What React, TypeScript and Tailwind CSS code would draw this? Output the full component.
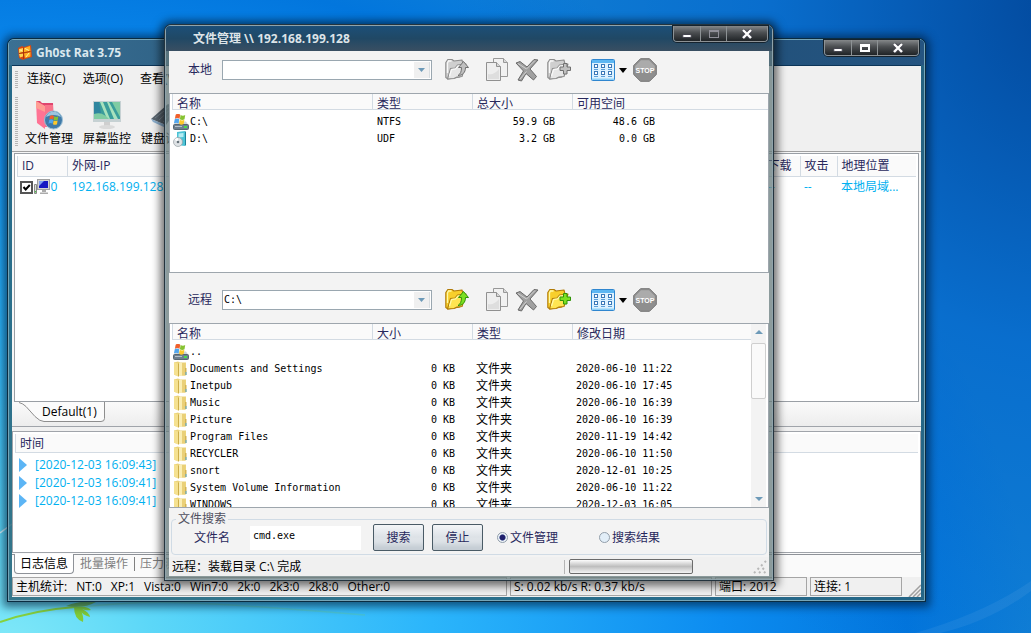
import type { ReactNode } from "react";

const drives = [
  { name: "C:\\", type: "NTFS", total: "59.9 GB", free: "48.6 GB", disc: false },
  { name: "D:\\", type: "UDF", total: "3.2 GB", free: "0.0 GB", disc: true },
];

const folders = [
  { name: "Documents and Settings", date: "2020-06-10 11:22" },
  { name: "Inetpub", date: "2020-06-10 17:45" },
  { name: "Music", date: "2020-06-10 16:39" },
  { name: "Picture", date: "2020-06-10 16:39" },
  { name: "Program Files", date: "2020-11-19 14:42" },
  { name: "RECYCLER", date: "2020-06-10 11:50" },
  { name: "snort", date: "2020-12-01 10:25" },
  { name: "System Volume Information", date: "2020-06-10 11:22" },
  { name: "WINDOWS", date: "2020-12-03 16:05" },
];

const logs = [
  "[2020-12-03 16:09:43]",
  "[2020-12-03 16:09:41]",
  "[2020-12-03 16:09:41]",
];

const hostStats = ["NT:0", "XP:1", "Vista:0", "Win7:0", "2k:0", "2k3:0", "2k8:0", "Other:0"];

/* ---------- Icons ---------- */

function FolderIcon({ gray, badge }: { gray?: boolean; badge: "up" | "plus" }) {
  const line = gray ? "#8c8c8c" : "#b07a08";
  const back = gray ? "#cfcfcf" : "#f8cf2c";
  const front = gray ? "#e6e6e6" : "#ffe552";
  const shine = gray ? "#f8f8f8" : "#fff9a8";
  const badgeFill = gray ? "#c0c0c0" : "#7be021";
  const badgeLine = gray ? "#707070" : "#2f9308";
  return (
    <svg viewBox="0 0 24 24" aria-hidden className="size-6">
      <path d="M.800 19.500V4.500l2-3H7l2 1.500 8-1 1 4-3 13-12 2z" fill={back} stroke={line} strokeWidth="1.100" strokeLinejoin="round" />
      <path d="M2.500 21 5.500 10.500l4.500-.5 2.500-3L21 6l-4 12.500-5 .5-3 1.500z" fill={front} stroke={line} strokeWidth="1.100" strokeLinejoin="round" />
      <path d="m4.500 18 2-6.500 4-.5 2.500-3 5-.5M2.500 15V5l1-2h3" fill="none" stroke={shine} strokeWidth="1.300" />
      {badge === "up" ? (
        <path
          d="M18.500 3.500 23.500 9.500h-3c0 5-3 8-7.500 8 2.500-1.500 3.500-4 3.500-8h-3z"
          fill={badgeFill}
          stroke={badgeLine}
        />
      ) : (
        <path
          d="M16.500 5.500h3.500v3.500h3.500v3.500H20V16h-3.500v-3.500H13V9h3.500z"
          fill={badgeFill}
          stroke={badgeLine}
        />
      )}
    </svg>
  );
}

function CopyIcon() {
  return (
    <svg viewBox="0 0 24 24" aria-hidden className="size-6">
      <path d="M8.500.500h10l4 4v14h-14z" fill="#f1f1f1" stroke="#989898" />
      <path d="M18.500.500v4h4" fill="#d8d8d8" stroke="#989898" />
      <path d="M1.500 4.500h10l4 4v14h-14z" fill="#eeeeee" stroke="#909090" />
      <path d="M3 21v-5c4 1 8-1 11-5v10z" fill="#dedede" />
      <path d="M11.500 4.500v4h4" fill="#d8d8d8" stroke="#909090" />
    </svg>
  );
}

function DeleteIcon() {
  return (
    <svg viewBox="0 0 24 24" aria-hidden className="size-6">
      <path
        d="M1 5 5 3.500l7 5.500 7-7.500 4 .5-8 9 6.500 7.500-3 3.500-7.500-6.500L6.500 23 3 22l5.500-9z"
        fill="#a0a0a0"
        stroke="#6a6a6a"
        strokeLinejoin="round"
      />
      <path d="m3 5.500 8.500 5.500L20 2.500M5 21l6.500-7.500" fill="none" stroke="#d0d0d0" />
    </svg>
  );
}

function ViewIcon() {
  const cells = [4, 11, 18];
  return (
    <svg viewBox="0 0 24 22" aria-hidden className="h-[22px] w-6">
      <rect x=".5" y=".5" width="23" height="21" rx="1" fill="#dcf1ff" stroke="#2f86cf" />
      <path d="M1 1h22v3H1z" fill="#5cb6f2" />
      <path d="M1 19.500h22V21H1z" fill="#8fd0f7" />
      {[5, 12].map((y) =>
        cells.map((x) => (
          <g key={`${x}-${y}`}>
            <rect x={x - 0.500} y={y + 0.500} width="3" height="3" fill="#fff" stroke="#3a78b8" />
            <path d={`M${x - 1} ${y + 5.500}h4`} stroke="#5b9fd8" />
          </g>
        )),
      )}
    </svg>
  );
}

function StopIcon() {
  return (
    <svg viewBox="0 0 24 24" aria-hidden className="size-6">
      <path d="M7.500.700h9l6.800 6.800v9l-6.800 6.800h-9L.700 16.500v-9z" fill="#8f8f8f" stroke="#757575" />
      <path d="M8 2.200h8L21.800 8v3.500H2.200V8z" fill="#ababab" />
      <text x="12" y="14.500" textAnchor="middle" fontSize="7" fontWeight="700" fill="#fff" fontFamily="Liberation Sans, sans-serif">
        STOP
      </text>
    </svg>
  );
}

function WindowsFlag({ x, y, s }: { x: number; y: number; s: number }) {
  return (
    <g transform={`translate(${x} ${y}) scale(${s})`}>
      <path d="M1 1q2-1.500 4 0L4.300 4.700Q2.500 3 .300 4.700z" fill="#f0602c" />
      <path d="M5.300 1.300q2 1.400 4 0L8.700 5q-2 1.200-4 0z" fill="#86c232" />
      <path d="M.200 5q2-1.500 4 0L3.500 8.700q-2-1.300-4 0z" fill="#4fa6ee" />
      <path d="M4.600 5.400q2 1.300 4 0L8 9.200q-2 1.300-4 0z" fill="#fdc82a" />
    </g>
  );
}

function DriveIcon() {
  return (
    <svg viewBox="0 0 16 16" aria-hidden className="size-4 shrink-0">
      <path d="m1 10.500 2-3h10l2 3z" fill="#ccd4da" />
      <rect x=".5" y="10.500" width="15" height="5" rx="1" fill="#6d7f8e" stroke="#566672" />
      <path d="M2 12.500h7" stroke="#b3c0ca" />
      <rect x="11" y="12" width="3" height="2" fill="#45d84f" />
      <WindowsFlag x={1.500} y={-0.500} s={1.150} />
    </svg>
  );
}

function DiscIcon() {
  return (
    <svg viewBox="0 0 16 16" aria-hidden className="size-4 shrink-0">
      <path d="m4 1 8-1v15l-8-1z" fill="#4cc3d6" />
      <path d="m5.500 2.500 5-.5v4l-5 .5z" fill="#b4ecf2" />
      <path d="m12 0 1 1v13l-1 1z" fill="#1b8298" />
      <circle cx="5" cy="11" r="4.500" fill="#dfe3e6" stroke="#959ea4" strokeWidth=".7" />
      <path d="m5 11-3.500-2.500A4 4 0 0 1 5 7z" fill="#fff" />
      <circle cx="5" cy="11" r="1.300" fill="#67737b" />
    </svg>
  );
}

function YellowFolder() {
  return (
    <svg viewBox="0 0 16 16" aria-hidden className="size-4 shrink-0">
      <path d="M1 1.500 5 .500l2 1h6v13H3l-2-1z" fill="#ecd47a" />
      <path d="m1 1.500 4 1v13l-4-2z" fill="#f5e190" />
      <path d="M5 2.500h1v13H5z" fill="#cdae49" />
      <path d="M6 2h3v12.500H6z" fill="#faeeb4" />
      <path d="M9 2h3v12.500H9z" fill="#ead078" />
      <path d="M12 7h1.500v7H12z" fill="#d3b352" />
      <path d="M12.500 11h1v3h-1z" fill="#55aede" />
    </svg>
  );
}

function AppIcon() {
  return (
    <svg viewBox="0 0 16 16" aria-hidden className="size-4">
      <path d="m1 3 4-2 2 1 7-2 1 12-7 2-2 1-4-2z" fill="#d94812" />
      <path d="m2 4 4-1v4L2 8zM2 9l4-.5v3L3 12.500z" fill="#ffd451" />
      <path d="m7 3 6-2 .5 5L7 7.500zM7 8.500 13.500 7v4.500L8 13z" fill="#ffb021" />
      <path d="m8 3.500 4 2M9 12l3-4M3 5l2 .5" stroke="#fff3a0" />
      <path d="M6.500 2.500v11.500M2 8.500 13 6.500" stroke="#a5340a" strokeWidth=".8" />
    </svg>
  );
}

function FileManagerIcon() {
  return (
    <svg viewBox="0 0 28 30" aria-hidden className="h-[30px] w-7">
      <path d="M1 1h4l2 2h11l1 24H8z" fill="#e0456e" />
      <path d="m1 1 9 5v23l-8-6z" fill="#ff7394" />
      <path d="m1 1 9 5v6L1 8z" fill="#ff9d93" />
      <path d="M10 5h8v22h-8z" fill="#f8748a" />
      <circle cx="18.500" cy="20" r="9" fill="#3f7aa8" stroke="#9dc0d6" />
      <path d="M11 17a8 8 0 0 1 15 0q-7-4-15 0z" fill="#9bc5df" />
      <WindowsFlag x={14} y={15} s={1} />
    </svg>
  );
}

function ScreenIcon() {
  return (
    <svg viewBox="0 0 30 30" aria-hidden className="size-[30px]">
      <path d="M1 1h28v21H1z" fill="#c6d1d3" />
      <path d="M2 2h26v17H2z" fill="#3a9d9b" />
      <path d="M2 2h5l3 17H2z" fill="#2f869f" />
      <path d="M8 2h3l7 17h-3zM15 2h2l9 17h-4z" fill="#a8e2bd" />
      <path d="m20 2 8 15V2zM2 14q8-3 15 5H2z" fill="#7fcca3" />
      <path d="M12 22h6v4h-6z" fill="#cfcfcf" />
      <ellipse cx="15" cy="27" rx="8" ry="2" fill="#dadada" />
    </svg>
  );
}

function KeyboardIcon() {
  return (
    <svg viewBox="0 0 30 30" aria-hidden className="size-[30px]">
      <path d="M1 19 18 4l10 4-12 17z" fill="#5a6670" />
      <path d="m1 19 15 6v3L3 22z" fill="#8db0cf" />
      <path d="m5 18 14-11M9 20 22 8M13 22 25 9" stroke="#79858e" />
    </svg>
  );
}

function ComputerIcon() {
  return (
    <svg viewBox="0 0 16 16" aria-hidden className="size-4">
      <path d="M.500 5.500h2v9h-2z" fill="#dde0d4" stroke="#8a8a8a" />
      <path d="M1 12h1v1.500H1z" fill="#45c845" />
      <rect x="3.500" y=".5" width="12" height="10" fill="#d3d3d3" stroke="#a0a0a0" />
      <path d="M5 2h9v7H5z" fill="#1717c2" />
      <path d="M5 2h5L5 7z" fill="#7f9ff2" />
      <path d="M8 11h4v2H8zM6 13.500h8V15H6z" fill="#ababab" />
    </svg>
  );
}

/* ---------- Window chrome ---------- */

function CaptionButtons({ maxDisabled }: { maxDisabled?: boolean }) {
  const base =
    "flex h-[15px] items-center justify-center bg-linear-to-b from-[#85888a] via-[#4b4e51] via-45% to-[#202427]";
  return (
    <div className="flex divide-x divide-[#8d9295] overflow-hidden rounded-b border border-t-0 border-[#8d9295] shadow-[0_0_0_1px_#15232e]">
      <button type="button" aria-label="最小化" className={`${base} w-[27px]`}>
        <span className="mt-1 h-1 w-2.5 rounded-xs border border-[#45454f] bg-white" />
      </button>
      <button type="button" aria-label="最大化" disabled={maxDisabled} className={`${base} w-[26px]`}>
        <span
          className={
            maxDisabled
              ? "h-2 w-2.5 border border-t-2 border-[#8f8f98]"
              : "h-2 w-2.5 border-2 border-t-3 border-white"
          }
        />
      </button>
      <button type="button" aria-label="关闭" className={`${base} w-[40px]`}>
        <svg viewBox="0 0 12 10" aria-hidden className="h-2.5 w-3">
          <path d="m2 1 8 8m0-8L2 9" stroke="#45454f" strokeWidth="4" />
          <path d="m2 1 8 8m0-8L2 9" stroke="#fff" strokeWidth="2.400" />
        </svg>
      </button>
    </div>
  );
}

function Combo({ id, label, value }: { id: string; label: string; value: string }) {
  return (
    <>
      <label htmlFor={id} className="w-[34px] shrink-0 text-[#28285c]">
        {label}
      </label>
      <div className="relative w-[210px]">
        <select
          id={id}
          defaultValue={value}
          className="block h-5 w-full appearance-none border border-[#9aa7b0] bg-white px-px font-['DejaVu_Sans_Mono',monospace] text-[10px] leading-4 text-black"
        >
          <option>{value}</option>
        </select>
        <span className="pointer-events-none absolute inset-y-0.5 right-0.5 flex w-4 items-center justify-center border-r border-[#d8dde0] bg-[#f0f0f0]">
          <svg viewBox="0 0 7 4" aria-hidden className="h-1 w-[7px]">
            <path d="M0 0h7L3.500 4z" fill="#6d9ab8" />
          </svg>
        </span>
      </div>
    </>
  );
}

function PathBar({ id, label, value, gray, className }: { id: string; label: string; value: string; gray?: boolean; className: string }) {
  return (
    <div className={`flex shrink-0 items-center pl-[19px] ${className}`}>
      <Combo id={id} label={label} value={value} />
      <div className="ml-[13px] flex items-center">
        <button type="button" aria-label="上级目录" className="mr-4">
          <FolderIcon gray={gray} badge="up" />
        </button>
        <button type="button" aria-label="复制" className="mr-1.5">
          <CopyIcon />
        </button>
        <button type="button" aria-label="删除" className="mr-2">
          <DeleteIcon />
        </button>
        <button type="button" aria-label="新建文件夹" className="mr-5">
          <FolderIcon gray={gray} badge="plus" />
        </button>
        <button type="button" aria-label="查看方式" className="mr-1.5 flex items-center gap-1">
          <ViewIcon />
          <svg viewBox="0 0 8 5" aria-hidden className="h-[5px] w-2">
            <path d="M0 0h8L4 5z" fill="#000" />
          </svg>
        </button>
        <button type="button" aria-label="停止传输">
          <StopIcon />
        </button>
      </div>
    </div>
  );
}

function FileTable({ heads, children }: { heads: string[]; children: ReactNode }) {
  return (
    <table className="w-full table-fixed border-collapse font-['DejaVu_Sans_Mono','Noto_Sans_CJK_SC',monospace] text-[10px] leading-4 text-black">
      <colgroup>
        <col className="w-[200px]" />
        <col className="w-[100px]" />
        <col className="w-[100px]" />
        <col />
      </colgroup>
      <thead>
        <tr>
          {heads.map((h) => (
            <th key={h} className="h-[19px] p-0 text-left align-top font-normal">
              <div className="h-4 border-b border-l border-[#d3dbe3] bg-[#fafafa] pl-1 font-['Noto_Sans_CJK_SC',sans-serif] text-[12px] leading-[18px] text-[#28285c]">
                {h}
              </div>
            </th>
          ))}
        </tr>
      </thead>
      <tbody>{children}</tbody>
    </table>
  );
}

function NameCell({ icon, name }: { icon: ReactNode; name: string }) {
  return (
    <td className="h-[17px] p-0">
      <div className="flex h-[17px] items-center gap-px whitespace-nowrap pl-px">
        {icon}
        {name}
      </div>
    </td>
  );
}

function ScrollBar() {
  return (
    <div aria-hidden className="flex w-[17px] shrink-0 flex-col items-center border-r-2 border-white bg-[#f3f3f3]">
      <svg viewBox="0 0 8 4" className="my-1.5 h-1 w-2">
        <path d="m4 0 4 4H0z" fill="#6d9ab8" />
      </svg>
      <div className="mt-[3px] h-14 w-[15px] rounded-xs border border-[#cfcfcf] bg-[#fafafa]" />
      <div className="flex-1" />
      <svg viewBox="0 0 8 4" className="my-1.5 h-1 w-2">
        <path d="M0 0h8L4 4z" fill="#6d9ab8" />
      </svg>
    </div>
  );
}

function Grip({ className }: { className: string }) {
  return (
    <div
      aria-hidden
      className={`w-[3px] bg-[repeating-linear-gradient(to_bottom,#b5b5b5_0,#b5b5b5_1px,transparent_1px,transparent_2px)] ${className}`}
    />
  );
}

function SizeGrip() {
  return (
    <svg viewBox="0 0 13 13" aria-hidden className="size-[13px] self-end">
      <path d="M1 13 13 1M5 13l8-8M9 13l4-4" stroke="#a0a0a0" strokeWidth="1.500" />
    </svg>
  );
}

/* ---------- Windows ---------- */

function MainWindow() {
  return (
    <section className="absolute top-[39px] right-[106px] bottom-[32px] left-2 flex flex-col rounded-t-md border border-[#76a5b8] bg-[#2b6478]/85 px-[3px] pb-[3px] shadow-[0_0_0_1px_#0b2c40,0_1px_9px_5px_rgba(0,25,50,0.6)]">
      <header className="-mx-[3px] flex h-[25px] shrink-0 items-start justify-between rounded-t bg-linear-to-r from-[#3b7093] via-[#1d4d73] to-[#255480] pr-[5px] pl-2">
        <h1 className="flex h-[25px] items-center gap-[3px] text-[12px] font-bold text-[#dbe8ee]">
          <AppIcon />
          Gh0st Rat 3.75
        </h1>
        <CaptionButtons />
      </header>

      <div className="flex min-h-0 flex-1 flex-col bg-[#f0f0f0]">
        <nav className="flex h-[27px] shrink-0 items-center gap-[17px] border-t border-[#0c3558] pl-[3px] text-black">
          <Grip className="-mr-2 h-[17px]" />
          <button type="button">连接(C)</button>
          <button type="button">选项(O)</button>
          <button type="button">查看(V)</button>
        </nav>
        <div className="flex h-[59px] shrink-0 items-center pl-[3px] text-black">
          <Grip className="mr-0.5 h-[50px]" />
          {[
            { label: "文件管理", icon: <FileManagerIcon /> },
            { label: "屏幕监控", icon: <ScreenIcon /> },
            { label: "键盘记录", icon: <KeyboardIcon /> },
          ].map((b) => (
            <button key={b.label} type="button" className="flex w-[58px] flex-col items-center whitespace-nowrap pt-1">
              {b.icon}
              <span className="leading-[18px]">{b.label}</span>
            </button>
          ))}
        </div>

        <div className="min-h-0 flex-1 border-t border-[#a0a0a0] bg-[#f6f6f6] px-0.5 pt-px">
          <div className="h-full overflow-hidden border border-[#9a9fa5] bg-white px-0.5 pt-0.5">
            <table className="w-full table-fixed border-collapse">
              <colgroup>
                <col className="w-[50px]" />
                <col className="w-[200px]" />
                <col />
                <col className="w-[37px]" />
                <col className="w-[37px]" />
                <col className="w-[79px]" />
              </colgroup>
              <thead>
                <tr className="h-5 border-b border-[#d3dbe3] bg-[#fafafa] text-left text-[#28285c] [&>th]:border-l [&>th]:border-[#d3dbe3] [&>th]:py-0 [&>th]:pl-1 [&>th]:font-normal [&>th]:whitespace-nowrap">
                  <th>ID</th>
                  <th>外网-IP</th>
                  <th />
                  <th>下载</th>
                  <th>攻击</th>
                  <th>地理位置</th>
                </tr>
              </thead>
              <tbody>
                <tr className="h-[22px] text-[#00b0f0] [&>td]:py-0 [&>td]:pl-1 [&>td]:whitespace-nowrap">
                  <td>
                    <label className="-ml-0.5 flex items-center gap-px">
                      <span className="relative flex size-[13px] shrink-0">
                        <input
                          type="checkbox"
                          defaultChecked
                          className="size-[13px] appearance-none border-2 border-[#555] bg-white"
                        />
                        <svg viewBox="0 0 13 13" aria-hidden className="pointer-events-none absolute inset-0">
                          <path d="m3.500 6 2.200 2.500L9.800 4" fill="none" stroke="#000" strokeWidth="2" />
                        </svg>
                      </span>
                      <ComputerIcon />
                      <span>0</span>
                    </label>
                  </td>
                  <td>192.168.199.128</td>
                  <td />
                  <td>--</td>
                  <td>--</td>
                  <td>本地局域...</td>
                </tr>
              </tbody>
            </table>
          </div>
        </div>

        <div className="h-[25px] shrink-0 border-b border-[#a0a4aa] bg-linear-to-b from-[#fafafa] to-[#ededed] pl-0.5">
          <div className="relative h-5 w-[91px]">
            <svg viewBox="0 0 91 20" aria-hidden className="absolute inset-0 h-5 w-[91px]">
              <path d="M0-1h5q4 1 7 5l9 10q5 5 9 5h57q3 0 3-3V-1z" fill="#fbfbfb" />
              <path d="M5 .500q4 1 7 4l9 10q5 5 9 5h57q3.500 0 3.500-3V0" fill="none" stroke="#8e8e8e" />
            </svg>
            <button type="button" className="relative pl-7 leading-5 text-black">
              Default(1)
            </button>
          </div>
        </div>

        <div className="mt-1 h-[122px] shrink-0 border border-[#a0a4aa] bg-white px-0.5 pt-0.5">
          <div className="h-[19px] border-b border-l border-[#d3dbe3] bg-[#fafafa] pl-1 leading-5 text-[#28285c]">
            时间
          </div>
          <ul className="pt-[3px]">
            {logs.map((l, i) => (
              <li key={i} className="flex h-[18px] items-center gap-2 pl-1 text-[#00b0f0]">
                <svg viewBox="0 0 8 14" aria-hidden className="h-3.5 w-2">
                  <path d="M0 0v14l8-7z" fill="#5cb5f5" />
                </svg>
                {l}
              </li>
            ))}
          </ul>
        </div>

        <div className="flex h-6 shrink-0 items-start bg-[#fafafa] pt-px">
          <div className="flex flex-1 items-start border-t border-[#8e9298] pl-0.5 text-[#808080]">
            <button type="button" className="-mt-px h-5 rounded-b border border-t-0 border-[#8e9298] bg-white px-[5px] text-black">
              日志信息
            </button>
            <button type="button" className="h-[18px] px-1.5">批量操作</button>
            <button type="button" className="mt-0.5 h-3.5 border-l border-[#808080] px-[5px] leading-3.5">
              压力测试
            </button>
          </div>
        </div>

        <footer className="flex h-5 shrink-0 gap-[3px] text-black [&>div]:h-[19px] [&>div]:border [&>div]:border-[#a5a5a5] [&>div]:pl-[3px] [&>div]:leading-[18px]">
          <div className="flex min-w-0 flex-1 gap-[9px] overflow-hidden whitespace-nowrap">
            <span>主机统计:</span>
            {hostStats.map((s) => (
              <span key={s}>{s}</span>
            ))}
          </div>
          <div className="w-[202px]">S: 0.02 kb/s R: 0.37 kb/s</div>
          <div className="w-[92px]">端口: 2012</div>
          <div className="w-[92px]">连接: 1</div>
          <span className="flex w-4 justify-end">
            <SizeGrip />
          </span>
        </footer>
      </div>
    </section>
  );
}

function FileManagerWindow() {
  const action =
    "h-[27px] w-[51px] rounded-xs border border-[#4a5b66] bg-linear-to-b from-[#f4f6f8] from-0% via-[#dde2e7] via-48% to-[#e8ecef] text-[#28285c] shadow-[inset_0_-9px_5px_-3px_#c5cdd4]";
  return (
    <section className="absolute top-[25px] right-[258px] bottom-[53px] left-[165px] flex flex-col rounded-t-md border border-[#8fa3ab] bg-[#66797b]/75 px-[3px] pb-[3px] shadow-[0_0_0_1px_#24343e,0_1px_9px_5px_rgba(0,0,0,0.55)]">
      <header className="-mx-[3px] flex h-[25px] shrink-0 items-start justify-between rounded-t bg-linear-to-b from-[#1c4f78] via-[#204865] via-50% to-[#394f62] pr-1 pl-[27px]">
        <h2 className="text-[12px] leading-[26px] font-bold text-[#dde4e8]">文件管理 \\ 192.168.199.128</h2>
        <CaptionButtons maxDisabled />
      </header>

      <div className="flex min-h-0 flex-1 flex-col bg-[#f3f3f3]">
        <PathBar id="local-path" label="本地" value="" gray className="h-[42px] pb-1" />
        <div className="h-45 shrink-0 overflow-hidden border border-[#9ea6ad] bg-white pl-0.5">
          <FileTable heads={["名称", "类型", "总大小", "可用空间"]}>
            {drives.map((d) => (
              <tr key={d.name}>
                <NameCell icon={d.disc ? <DiscIcon /> : <DriveIcon />} name={d.name} />
                <td className="py-0 pr-0 pl-[5px]">{d.type}</td>
                <td className="py-0 pr-[17px] pl-0 text-right">{d.total}</td>
                <td className="p-0">
                  <div className="w-[83px] text-right">{d.free}</div>
                </td>
              </tr>
            ))}
          </FileTable>
        </div>

        <PathBar id="remote-path" label="远程" value="C:\" className="h-[50px] pt-1" />
        <div className="flex min-h-0 flex-1 overflow-hidden border border-[#9ea6ad] bg-white pl-0.5">
          <div className="min-w-0 flex-1 overflow-hidden">
            <FileTable heads={["名称", "大小", "类型", "修改日期"]}>
              <tr>
                <NameCell icon={<DriveIcon />} name=".." />
                <td />
                <td />
                <td />
              </tr>
              {folders.map((f) => (
                <tr key={f.name}>
                  <NameCell icon={<YellowFolder />} name={f.name} />
                  <td className="py-0 pr-[17px] pl-0 text-right">0 KB</td>
                  <td className="py-0 pr-0 pl-1 text-[12px] leading-4">文件夹</td>
                  <td className="py-0 pr-0 pl-1">{f.date}</td>
                </tr>
              ))}
            </FileTable>
          </div>
          <ScrollBar />
        </div>

        <div className="h-[49px] shrink-0 px-0.5 pt-[3px]">
          <fieldset className="h-11 rounded border border-[#d0dbe5] pl-[22px] text-[#28285c]">
            <legend className="-ml-[18px] px-0.5 leading-4 text-[#505060]">文件搜索</legend>
            <div className="-mt-[3px] flex h-[27px] items-center">
              <label htmlFor="file-name" className="w-14">
                文件名
              </label>
              <input
                id="file-name"
                type="text"
                defaultValue="cmd.exe"
                className="h-6 w-[111px] bg-white px-[3px] pb-1 font-['DejaVu_Sans_Mono',monospace] text-[10px] text-black"
              />
              <button type="submit" className={`${action} ml-3`}>
                搜索
              </button>
              <button type="button" className={`${action} ml-2`}>
                停止
              </button>
              {[
                { label: "文件管理", on: true, pos: "ml-3.5 w-[102px]" },
                { label: "搜索结果", on: false, pos: "" },
              ].map((r) => (
                <label key={r.label} className={`flex items-center gap-0.5 whitespace-nowrap ${r.pos}`}>
                  <input
                    type="radio"
                    name="result-view"
                    defaultChecked={r.on}
                    className="size-[11px] appearance-none rounded-full border border-[#929eaa] bg-[#e2eef8] checked:bg-radial checked:from-[#20206c] checked:from-40% checked:to-[#eef4f9] checked:to-55%"
                  />
                  {r.label}
                </label>
              ))}
            </div>
          </fieldset>
        </div>

        <footer className="flex h-[19px] shrink-0 items-center bg-[#f0f0f0] pl-[3px] text-black">
          <span className="min-w-0 flex-1 truncate leading-5">远程：装载目录 C:\ 完成</span>
          <span className="mr-1 h-3.5 border-l border-[#b4b4b4]" />
          <div
            role="progressbar"
            aria-label="进度"
            className="mr-[60px] h-[15px] w-[124px] rounded-xs border border-[#6b6b6b] bg-linear-to-b from-[#fcfcfc] via-[#bebebe] to-[#f4f4f4]"
          />
          <svg viewBox="0 0 14 14" aria-hidden className="mr-0.5 size-3.5">
            <path d="M1 13 13 1M6 13l7-7M11 13l2-2" stroke="#b8b8b8" strokeWidth="2" strokeDasharray="2 3" />
          </svg>
        </footer>
      </div>
    </section>
  );
}

function Wallpaper() {
  return (
    <svg viewBox="0 0 1031 633" preserveAspectRatio="none" aria-hidden className="absolute inset-0 size-full">
      <path d="M915 633q70-20 116-52v10q-40 30-90 42z" fill="#fff" opacity=".06" />
      <path d="M0 533 12 524" stroke="#d9f7ff" strokeWidth="1.500" />
      <path d="M75 608q60-8 120-5t170 12" fill="none" stroke="#84ce46" strokeWidth="1.500" opacity=".2" />
      <path d="M0 622q35-12 75-15" fill="none" stroke="#86d13d" strokeWidth="2" />
      <path d="M66 606q14-6 30-4-12 7-30 4z" fill="#6fb95a" />
      <path d="M74 607q0 12 9 15 1-7-3-12 2 5 10 7-1-5-8-8 4 2 9 1-4-5-17-3z" fill="#80cb38" />
    </svg>
  );
}

export default function App() {
  return (
    <main className="relative h-screen min-h-[600px] min-w-[900px] overflow-hidden bg-[radial-gradient(ellipse_100%_125%_at_0%_103%,#83eaf8_0%,#5cd7f8_15%,#2bb5fb_42%,#0c8cf0_70%,#0276dd_88%,#1080d6_100%)] font-['Open_Sans','Noto_Sans_CJK_SC',sans-serif] text-[12px] leading-[18px]">
      <div className="absolute inset-0 bg-[radial-gradient(ellipse_60%_110%_at_104%_0%,rgba(0,62,145,0.85),rgba(0,88,195,0.45)_50%,transparent)]" />
      <Wallpaper />
      <MainWindow />
      <FileManagerWindow />
    </main>
  );
}
